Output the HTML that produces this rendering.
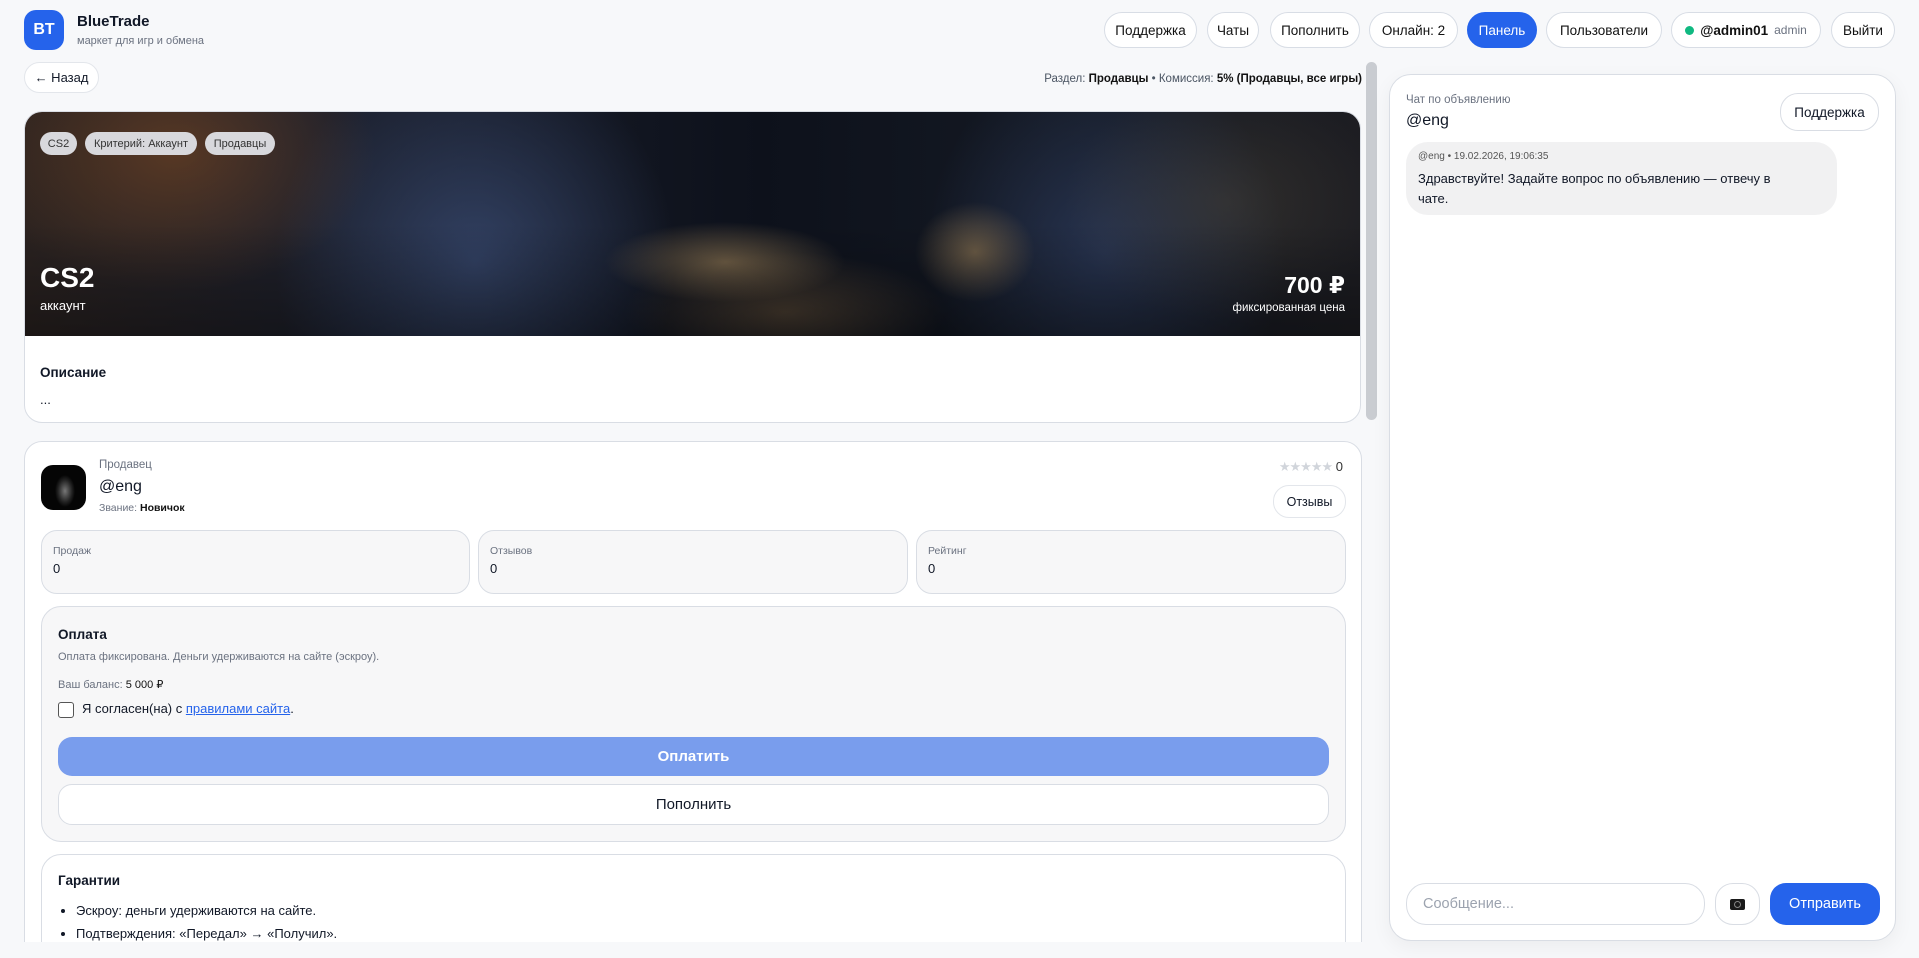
<!DOCTYPE html>
<html><head><meta charset="utf-8"><style>
*{box-sizing:border-box;margin:0;padding:0}
html{overflow:hidden;width:1919px;height:958px}
body{width:1919px;height:958px;overflow:hidden;background:#f7f8fa;font-family:"Liberation Sans","DejaVu Sans",sans-serif;color:#111827;position:relative}
.a{position:absolute}
.btn{position:absolute;top:12px;height:36px;border:1px solid #d8dde5;border-radius:18px;background:#fff;font-size:13.5px;display:flex;align-items:center;justify-content:center;color:#111}
.muted{color:#6b7280}
.box{position:absolute;border:1px solid #d9dde4;border-radius:16px;background:#f7f7f8}
</style></head><body>
<div class="a" style="left:24px;top:10px;width:40px;height:40px;border-radius:12px;background:#2563eb;color:#fff;font-weight:bold;font-size:16px;display:flex;align-items:center;justify-content:center">BT</div>
<div class="a" style="left:77px;top:13px;font-weight:bold;font-size:15px">BlueTrade</div>
<div class="a muted" style="left:77px;top:35px;font-size:11px">маркет для игр и обмена</div>

<div class="btn" style="left:1104px;width:93px">Поддержка</div>
<div class="btn" style="left:1207px;width:52px">Чаты</div>
<div class="btn" style="left:1270px;width:90px">Пополнить</div>
<div class="btn" style="left:1369px;width:89px">Онлайн: 2</div>
<div class="btn" style="left:1467px;width:70px;background:#2563eb;border-color:#2563eb;color:#fff">Панель</div>
<div class="btn" style="left:1546px;width:116px">Пользователи</div>
<div class="btn" style="left:1671px;width:150px;gap:6px"><span style="width:9px;height:9px;border-radius:50%;background:#10b981;display:inline-block"></span><b>@admin01</b><span class="muted" style="font-size:12px">admin</span></div>
<div class="btn" style="left:1831px;width:64px">Выйти</div>

<div class="a" style="left:24px;top:62px;width:75px;height:31px;border:1px solid #e3e6eb;border-radius:16px;background:#fff;font-size:13px;display:flex;align-items:center;justify-content:center">← Назад</div>
<div class="a" style="right:557px;top:73px;font-size:11.5px;color:#4b5563">Раздел: <b style="color:#111">Продавцы</b> • Комиссия: <b style="color:#111">5% (Продавцы, все игры)</b></div>

<div class="a" style="left:1366px;top:62px;width:11px;height:358px;border-radius:6px;background:#c9ccd1"></div>

<div class="a" style="left:0;top:100px;width:1380px;height:842px;overflow:hidden">
 <div class="a" style="left:24px;top:11px;width:1337px;height:312px;border:1px solid #d9dde4;border-radius:18px;background:#fff;overflow:hidden">
  <div class="a" style="left:0;top:0;width:1337px;height:224px;background:
   radial-gradient(ellipse 120px 40px at 700px 150px,rgba(170,140,95,.6),transparent),
   radial-gradient(ellipse 60px 50px at 950px 140px,rgba(160,130,85,.6),transparent),
   radial-gradient(ellipse 160px 60px at 760px 200px,rgba(120,95,65,.55),transparent),
   radial-gradient(ellipse 200px 140px at 150px 40px,rgba(130,75,35,.55),transparent),
   radial-gradient(ellipse 160px 120px at 1200px 90px,rgba(90,80,60,.35),transparent),
   radial-gradient(ellipse 200px 220px at 450px 150px,rgba(55,72,110,.85),transparent),
   radial-gradient(ellipse 180px 200px at 1080px 140px,rgba(45,60,95,.75),transparent),
   linear-gradient(90deg,#2a2220 0%,#1b1f2c 25%,#0d111b 55%,#151a24 80%,#1d1d22 100%)"></div>
  <div class="a" style="left:0;top:0;width:1337px;height:224px;background:linear-gradient(180deg,rgba(0,0,0,0) 50%,rgba(0,0,0,.35) 100%)"></div>
  <div class="a" style="left:15px;top:20px;height:23px;width:37px;border-radius:12px;background:#d8d8dc;font-size:11px;color:#333;display:flex;align-items:center;justify-content:center">CS2</div>
  <div class="a" style="left:60px;top:20px;height:23px;width:112px;border-radius:12px;background:#d8d8dc;font-size:11px;color:#333;display:flex;align-items:center;justify-content:center">Критерий: Аккаунт</div>
  <div class="a" style="left:180px;top:20px;height:23px;width:70px;border-radius:12px;background:#d8d8dc;font-size:11px;color:#333;display:flex;align-items:center;justify-content:center">Продавцы</div>
  <div class="a" style="left:15px;top:150px;color:#fff;font-weight:bold;font-size:28px">CS2</div>
  <div class="a" style="left:15px;top:186px;color:#fff;font-size:13px">аккаунт</div>
  <div class="a" style="right:15px;top:160px;color:#fff;font-weight:bold;font-size:23px">700 ₽</div>
  <div class="a" style="right:15px;top:190px;color:#fff;font-size:11.5px">фиксированная цена</div>
  <div class="a" style="left:15px;top:253px;font-weight:bold;font-size:13.5px">Описание</div>
  <div class="a" style="left:15px;top:280px;font-size:13px">...</div>
 </div>

 <div class="a" style="left:24px;top:341px;width:1338px;height:600px;border:1px solid #d9dde4;border-radius:18px;background:#fff">
  <div class="a" style="left:16px;top:23px;width:45px;height:45px;border-radius:12px;background:radial-gradient(ellipse 10px 16px at 24px 26px,#777,#222 70%,#050505)"></div>
  <div class="a muted" style="left:74px;top:17px;font-size:11.5px">Продавец</div>
  <div class="a" style="left:74px;top:36px;font-size:16px">@eng</div>
  <div class="a muted" style="left:74px;top:60px;font-size:10.5px">Звание: <b style="color:#111">Новичок</b></div>
  <div class="a" style="right:18px;top:17px;font-size:13px;color:#333"><span style="color:#d1d5db;letter-spacing:-1px">★★★★★</span> 0</div>
  <div class="a" style="left:1248px;top:43px;width:73px;height:33px;border:1px solid #e3e6eb;border-radius:16px;font-size:12.5px;display:flex;align-items:center;justify-content:center">Отзывы</div>

  <div class="box" style="left:16px;top:88px;width:429px;height:64px"><div class="a muted" style="left:11px;top:14px;font-size:10.5px">Продаж</div><div class="a" style="left:11px;top:30px;font-size:13px">0</div></div>
  <div class="box" style="left:453px;top:88px;width:430px;height:64px"><div class="a muted" style="left:11px;top:14px;font-size:10.5px">Отзывов</div><div class="a" style="left:11px;top:30px;font-size:13px">0</div></div>
  <div class="box" style="left:891px;top:88px;width:430px;height:64px"><div class="a muted" style="left:11px;top:14px;font-size:10.5px">Рейтинг</div><div class="a" style="left:11px;top:30px;font-size:13px">0</div></div>

  <div class="box" style="left:16px;top:164px;width:1305px;height:236px;border-radius:20px">
   <div class="a" style="left:16px;top:20px;font-weight:bold;font-size:13.5px">Оплата</div>
   <div class="a muted" style="left:16px;top:44px;font-size:11px">Оплата фиксирована. Деньги удерживаются на сайте (эскроу).</div>
   <div class="a muted" style="left:16px;top:71px;font-size:11px">Ваш баланс: <b style="color:#111;font-weight:normal">5 000 ₽</b></div>
   <div class="a" style="left:16px;top:95px;width:16px;height:16px;border:1.5px solid #555;border-radius:3px;background:#fff"></div>
   <div class="a" style="left:40px;top:94px;font-size:13px">Я согласен(на) с <span style="color:#2563eb;text-decoration:underline">правилами сайта</span>.</div>
   <div class="a" style="left:16px;top:130px;width:1271px;height:39px;border-radius:14px;background:#799ded;color:#fff;font-weight:bold;font-size:15px;display:flex;align-items:center;justify-content:center">Оплатить</div>
   <div class="a" style="left:16px;top:177px;width:1271px;height:41px;border-radius:14px;background:#fff;border:1px solid #d9dde4;font-size:15px;display:flex;align-items:center;justify-content:center">Пополнить</div>
  </div>

  <div class="a" style="left:16px;top:412px;width:1305px;height:200px;border:1px solid #d9dde4;border-radius:20px;background:#fff">
   <div class="a" style="left:16px;top:18px;font-weight:bold;font-size:13.5px">Гарантии</div>
   <ul class="a" style="left:34px;top:44px;font-size:13px;line-height:23px">
    <li>Эскроу: деньги удерживаются на сайте.</li>
    <li>Подтверждения: «Передал» → «Получил».</li>
   </ul>
  </div>
 </div>
</div>

<div class="a" style="left:1389px;top:74px;width:507px;height:867px;border:1px solid #d9dde4;border-radius:22px;background:#fff;box-shadow:0 6px 20px rgba(0,0,0,.05)">
 <div class="a muted" style="left:16px;top:19px;font-size:11.5px">Чат по объявлению</div>
 <div class="a" style="left:16px;top:37px;font-size:16px">@eng</div>
 <div class="a" style="left:390px;top:18px;width:99px;height:38px;border:1px solid #d9dde4;border-radius:18px;font-size:13.5px;display:flex;align-items:center;justify-content:center">Поддержка</div>
 <div class="a" style="left:16px;top:67px;width:431px;height:73px;border-radius:22px;background:#f1f1f2">
  <div class="a" style="left:12px;top:9px;font-size:10px;color:#555">@eng • 19.02.2026, 19:06:35</div>
  <div class="a" style="left:12px;top:27px;width:385px;font-size:13px;line-height:20px">Здравствуйте! Задайте вопрос по объявлению — отвечу в чате.</div>
 </div>
 <div class="a" style="left:16px;top:808px;width:299px;height:42px;border:1px solid #d9dde4;border-radius:20px;font-size:14.5px;color:#9ca3af;display:flex;align-items:center;padding-left:16px">Сообщение...</div>
 <div class="a" style="left:325px;top:808px;width:45px;height:42px;border:1px solid #d9dde4;border-radius:18px;display:flex;align-items:center;justify-content:center"><span style="width:15px;height:11px;background:#1a1a1a;border-radius:2px;display:block;position:relative"><span style="position:absolute;left:4px;top:2px;width:7px;height:7px;border:1px solid #888;border-radius:50%"></span></span></div>
 <div class="a" style="left:380px;top:808px;width:110px;height:42px;border-radius:16px;background:#2563eb;color:#fff;font-size:14.5px;display:flex;align-items:center;justify-content:center">Отправить</div>
</div>
</body></html>
